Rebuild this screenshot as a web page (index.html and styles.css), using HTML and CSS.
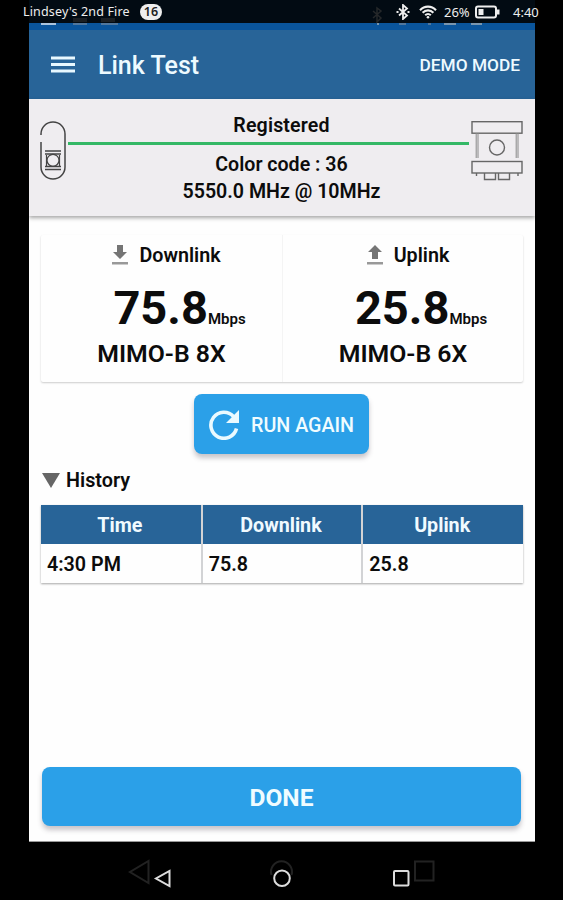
FILE: index.html
```html
<!DOCTYPE html>
<html lang="en">
<head>
    <meta charset="UTF-8">
    <meta name="viewport" content="width=device-width, initial-scale=1.0">
    <title>Link Test</title>
    <link rel="stylesheet" href="styles.css">
</head>
<body>
    <div class="status-bar">
        <span class="device-name">Lindsey's 2nd Fire</span>
        <span class="badge">16</span>
        <div class="status-icons">
            <svg class="bluetooth" width="14" height="16" viewBox="0 0 14 16" fill="none" stroke="#eee" stroke-width="1.8">
                <path d="M3 4.500l8 7-4 3.500V1l4 3.500-8 7M.5 8h2M11.500 8h2"/>
            </svg>
            <svg class="wifi" width="18" height="14" viewBox="0 0 18 14" fill="none" stroke="#eee" stroke-width="2.100">
                <path d="M1 5.200C5.500.4 12.500.4 17 5.200M3.600 7.800c3-3.200 7.800-3.200 10.800 0M6.200 10.200c1.600-1.600 4-1.600 5.600 0"/>
                <circle cx="9" cy="12.300" r="1.300" fill="#eee" stroke="none"/>
            </svg>
            <span class="battery-level">26%</span>
            <svg class="battery" width="25" height="14" viewBox="0 0 25 14">
                <rect x="1" y="1.500" width="20" height="11" rx="2" fill="none" stroke="#eee" stroke-width="2"/>
                <rect x="22" y="4.500" width="2.500" height="5" fill="#eee"/>
                <rect x="3.500" y="4" width="5" height="6" fill="#eee"/>
            </svg>
            <span class="clock">4:40</span>
        </div>
        <svg class="status-ghost" width="563" height="26" viewBox="0 0 563 26">
            <path d="M373 11l8 7-4 4V8l4 3-8 7" fill="none" stroke="#25282a" stroke-width="1.500"/>
            <path d="M73 20h14M101 20h14" stroke="#1b1f23" stroke-width="4"/>
            <path d="M41 24h15" stroke="#a9c4df" stroke-width="2"/>
            <path d="M73 24h14M101 24h17M399 24h7M428 24h3" stroke="#50779e" stroke-width="2"/>
            <path d="M377 24h2M444 24h12M471 24h11" stroke="#7896b0" stroke-width="2"/>
        </svg>
    </div>

    <div class="app">
        <div class="header">
            <svg class="menu-icon" width="24" height="18" viewBox="0 0 24 18" fill="#e8f8ff">
                <rect y="0.500" width="24" height="3"/>
                <rect y="7" width="24" height="3"/>
                <rect y="13.500" width="24" height="3"/>
            </svg>
            <h1>Link Test</h1>
            <span class="mode">DEMO MODE</span>
        </div>

        <div class="link-panel">
            <svg width="26" height="60" viewBox="0 0 26 60" fill="none" stroke="#444" stroke-width="1.500">
                <path d="M1 14V13a12 12 0 0 1 24 0v33a12 12 0 0 1-24 0V21"/>
                <path d="M5 30h16M5 33h16M5 45.500h16M5 48.500h16" stroke-width="1.400"/>
                <circle cx="13" cy="39.300" r="6" stroke-width="1.200"/>
                <path d="M6.500 34v11M19.500 34v11" stroke-width="1.200"/>
            </svg>
            <div class="link-info">
                <div class="link-state">Registered</div>
                <div class="link-line"></div>
                <div class="link-detail">Color code : 36</div>
                <div class="link-detail">5550.0 MHz @ 10MHz</div>
            </div>
            <svg width="52" height="60" viewBox="0 0 52 60" fill="none" stroke="#666" stroke-width="1.400">
                <rect x="1" y="0.700" width="50" height="11.500"/>
                <path d="M5.200 12v25M7 12v25M45.200 12v25M47 12v25" stroke-width="1" stroke="#888"/>
                <circle cx="26" cy="26.500" r="7.500"/>
                <rect x="1" y="40.500" width="50" height="11.500"/>
                <path d="M5.500 52v3M47 52v3M13.500 52v6.500H24.500v-6.500M27.500 52v6.500H38.500v-6.500"/>
            </svg>
        </div>

        <div class="results">
            <div class="result">
                <div class="result-title">
                    <svg width="16" height="20" viewBox="0 0 16 20" fill="#757575">
                        <path d="M5 0h6v7h4l-7 7-7-7h4z"/>
                        <rect y="17" width="16" height="2.500" fill="#999"/>
                    </svg>
                    <span>Downlink</span>
                </div>
                <div class="value">75.8<span class="unit">Mbps</span></div>
                <div class="modulation">MIMO-B 8X</div>
            </div>
            <div class="result">
                <div class="result-title">
                    <svg width="16" height="20" viewBox="0 0 16 20" fill="#757575">
                        <path d="M5 14h6V7h4L8 0 1 7h4z"/>
                        <rect y="17" width="16" height="2.500" fill="#999"/>
                    </svg>
                    <span>Uplink</span>
                </div>
                <div class="value">25.8<span class="unit">Mbps</span></div>
                <div class="modulation">MIMO-B 6X</div>
            </div>
        </div>

        <button class="btn btn-run">
            <svg width="30" height="30" viewBox="0 0 30 30">
                <path d="M24.500 6.500A13 13 0 1 0 27.500 18.500" fill="none" stroke="#eafaff" stroke-width="3.600"/>
                <path d="M30 0v13H17z" fill="#eafaff"/>
            </svg>
            <span>RUN AGAIN</span>
        </button>

        <div class="history-title">
            <svg width="18" height="15" viewBox="0 0 18 15"><path d="M0 0h18L9 15z" fill="#666"/></svg>
            <h2>History</h2>
        </div>

        <table class="history">
            <thead>
                <tr><th>Time</th><th>Downlink</th><th>Uplink</th></tr>
            </thead>
            <tbody>
                <tr><td>4:30 PM</td><td>75.8</td><td>25.8</td></tr>
            </tbody>
        </table>

        <button class="btn btn-done">DONE</button>
    </div>

    <div class="nav-bar">
        <svg width="563" height="58" viewBox="0 0 563 58" fill="none" stroke-width="2">
            <g stroke="#222">
                <path d="M148.500 19v22L130 30z"/>
                <path d="M271.500 33a10.500 10.500 0 1 1 20 0"/>
                <rect x="415" y="19.500" width="18.500" height="19"/>
            </g>
            <g stroke="#ddd">
                <path d="M169.500 29v15L156 36.500z"/>
                <circle cx="282" cy="36.200" r="7.800"/>
                <rect x="394" y="29" width="14.500" height="14.500" rx="1"/>
            </g>
        </svg>
    </div>
</body>
</html>
```

FILE: styles.css
```css
:root {
    --primary-color: #286498;
    --button-color: #2ba0e8;
    --panel-color: #efedf0;
}

* {
    margin: 0;
    padding: 0;
    box-sizing: border-box;
    font-family: Roboto, sans-serif;
}

body {
    width: 563px;
    height: 900px;
    background: #000;
    color: #0c0c0c;
    overflow: hidden;
}

svg {
    display: block;
    flex-shrink: 0;
}

.status-bar {
    position: relative;
    display: flex;
    align-items: center;
    height: 23px;
    padding: 0 22px 0 23px;
    background: linear-gradient(90deg, #000 29px, #020b13 29px, #020b13 535px, #000 535px);
    color: #eee;
}

.status-bar span {
    font-family: "Noto Sans", sans-serif;
    font-size: 12.5px;
    line-height: 22px;
}

.status-bar .device-name {
    width: 107px;
    white-space: nowrap;
    letter-spacing: 0.15px;
}

.status-bar .badge {
    width: 22px;
    height: 16px;
    margin-left: 10px;
    border-radius: 8px;
    background: #eee;
    color: #222;
    font-weight: 600;
    line-height: 16px;
    text-align: center;
}

.status-icons {
    display: flex;
    align-items: center;
    margin-left: auto;
}

.wifi {
    margin: 0 7px 0 9px;
}

.status-bar .battery-level {
    width: 28px;
    margin-right: 3px;
    font-size: 13px;
}

.status-bar .clock {
    width: 28px;
    margin-left: 13px;
    font-size: 13px;
}

.status-ghost {
    position: absolute;
    top: 0;
    left: 0;
}

.app {
    display: flex;
    flex-direction: column;
    width: 506px;
    height: 819px;
    margin-left: 29px;
    background: #fefefe;
    border-bottom: 1px solid #999;
}

.header {
    display: flex;
    align-items: center;
    height: 76px;
    padding: 0 15px 0 22px;
    background: var(--primary-color);
    border-top: 7px solid #0a559c;
    color: #edfaff;
}

.header h1 {
    margin-left: 23px;
    padding-top: 2px;
    font-size: 25px;
    font-weight: 500;
    line-height: 28px;
}

.header .mode {
    margin-left: auto;
    font-size: 17.3px;
    font-weight: 500;
}

.link-panel {
    display: flex;
    gap: 2px;
    height: 117px;
    padding: 22px 12px 0 11px;
    background: var(--panel-color);
    box-shadow: 0 2px 4px rgba(0,0,0,0.35);
}

.link-info {
    flex: 1;
    margin-top: -9px;
    text-align: center;
    font-size: 19.6px;
    font-weight: 600;
    line-height: 27px;
}

.link-state {
    height: 30px;
    margin-left: 26px;
    letter-spacing: 0.15px;
}

.link-line {
    height: 3px;
    margin-bottom: 6px;
    background: #34b866;
}

.link-detail {
    margin-left: 26px;
}

.results {
    display: grid;
    grid-template-columns: 1fr 1fr;
    height: 147px;
    margin: 19px 12px 0;
    border-radius: 2px;
    box-shadow: 0 1px 2px rgba(0,0,0,0.2);
    text-align: center;
}

.result + .result {
    border-left: 1px solid #f4f4f4;
}

.result-title {
    display: flex;
    justify-content: center;
    gap: 11px;
    height: 38px;
    padding: 10px 0 0 10px;
    font-size: 19.7px;
    font-weight: 600;
    line-height: 22px;
}

.value {
    padding-left: 36px;
    font-size: 47px;
    font-weight: 700;
    line-height: 69px;
    height: 68px;
}

.unit {
    font-size: 15px;
    font-weight: 600;
}

.modulation {
    font-size: 24.8px;
    font-weight: 600;
    line-height: 26px;
}

.btn {
    border: none;
    border-radius: 8px;
    background: var(--button-color);
    color: #f0fcff;
    box-shadow: 0 4px 5px rgba(60,50,65,0.28);
}

.btn-run {
    display: flex;
    align-items: center;
    gap: 12px;
    width: 175px;
    height: 60px;
    margin: 12px 0 0 165px;
    padding: 2px 0 0 15px;
    font-size: 19.7px;
    font-weight: 500;
}

.history-title {
    display: flex;
    align-items: center;
    gap: 6px;
    height: 26px;
    margin: 13px 13px 12px;
}

.history-title h2 {
    padding-top: 1px;
    font-size: 19.8px;
    font-weight: 600;
}

.history {
    width: 482px;
    height: 78px;
    margin: 0 12px;
    table-layout: fixed;
    border-collapse: collapse;
    box-shadow: 0 1px 2px rgba(0,0,0,0.35);
    font-size: 19.7px;
}

.history th {
    height: 39px;
    padding: 2px 2px 0 0;
    background: var(--primary-color);
    color: #f0faff;
    font-weight: 700;
}

.history td {
    height: 39px;
    padding: 2px 0 0 6px;
    font-weight: 600;
}

.history th + th,
.history td + td {
    border-left: 2px solid #d2d3d5;
}

.btn-done {
    height: 59px;
    margin: auto 14px 15px 13px;
    padding-top: 1px;
    font-size: 24.5px;
    font-weight: 700;
}

.nav-bar {
    height: 58px;
}
```
